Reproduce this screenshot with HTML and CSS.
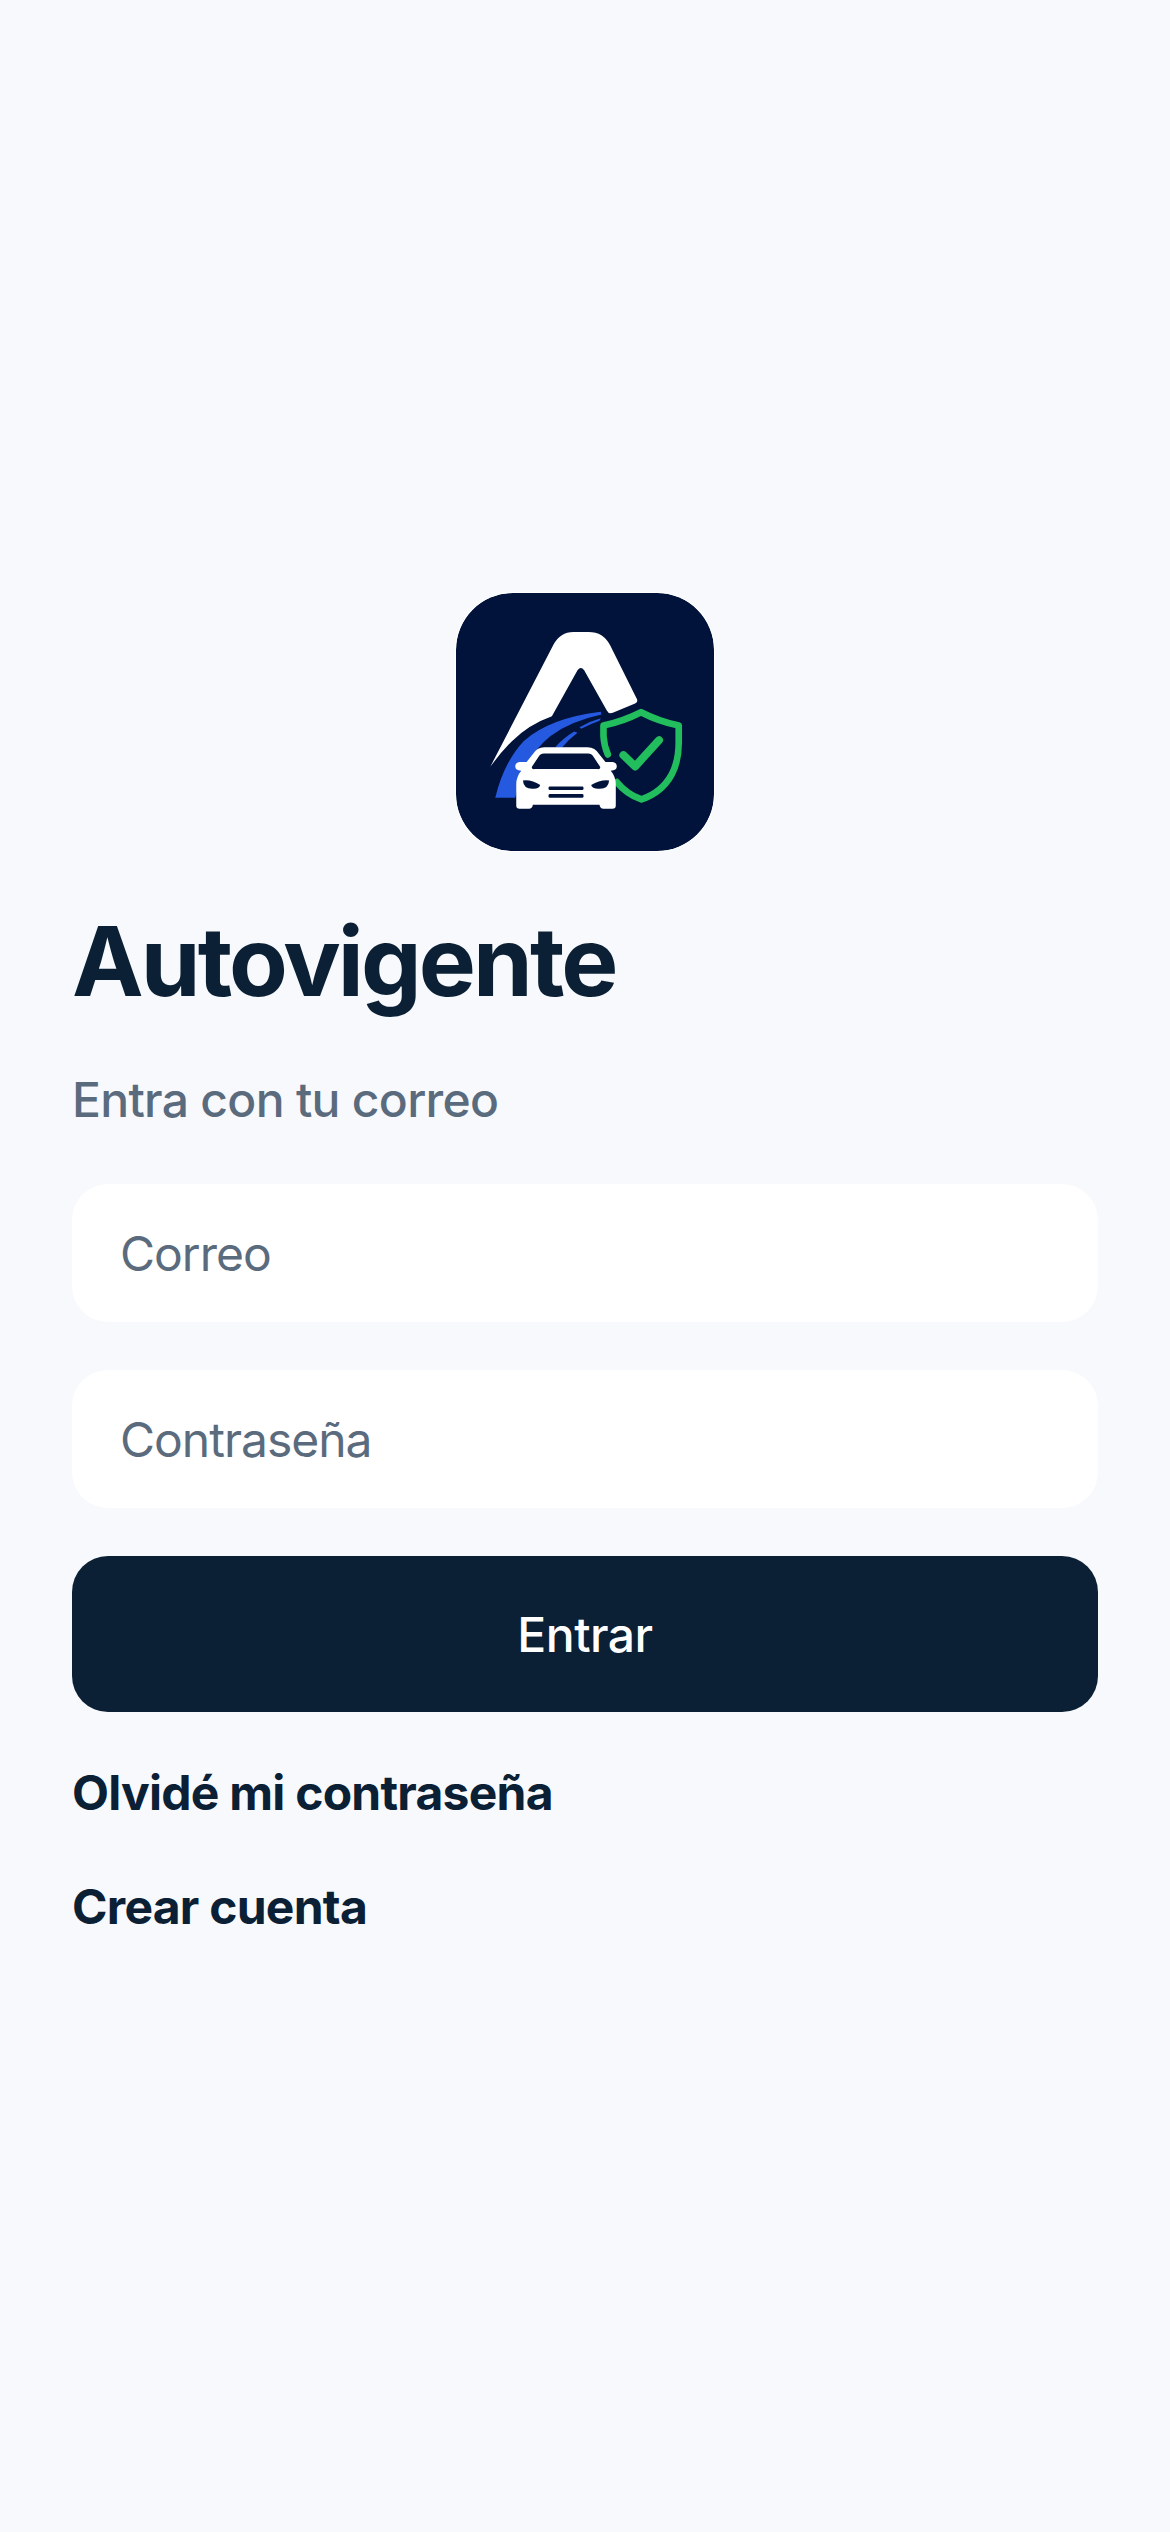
FILE: index.html
```html
<!DOCTYPE html>
<html lang="es">
<head>
  <meta charset="UTF-8">
  <title>Autovigente</title>
  <link rel="stylesheet" href="styles.css">
</head>
<body>
  <main class="login">
    <svg class="logo" viewBox="47 40 775 775" role="img" aria-label="Autovigente">
      <rect x="47" y="40" width="775" height="775" rx="170" fill="#02133b"/>
      <!-- A -->
      <path fill="#fff" d="M150 562 L340 195 Q360 157 400 157 L445 157 Q490 157 510 197 L590 358 Q595 368 585 372 L518 400 Q506 405 500 393 L432 272 Q422 258 412 272 L335 410 Q265 435 215 485 Q180 520 150 562 Z"/>
      <!-- carretera -->
      <path fill="#2559e0" d="M482 397 L484 405 Q390 425 330 470 Q250 535 225 655 L165 655 Q190 550 250 485 Q330 415 482 397 Z"/>
      <path fill="#2559e0" d="M418 443 Q448 425 482 416 L478 424 Q450 434 423 448 Z"/>
      <path fill="#2559e0" d="M345 503 Q370 475 402 456 L412 460 Q385 480 365 505 Z"/>
      <!-- escudo -->
      <path fill="none" stroke="#22bd5c" stroke-width="20" stroke-linejoin="round" stroke-linecap="round" d="M530 608 Q560 645 604 660 Q665 640 695 585 Q716 545 716 490 L716 438 Q655 425 603 398 Q550 425 490 438 L490 470 Q492 500 503 525"/>
      <path fill="none" stroke="#22bd5c" stroke-width="24" stroke-linejoin="round" stroke-linecap="round" d="M550 527 L585 561 L657 482"/>
      <!-- coche -->
      <path fill="#fff" d="M312 503 L442 503 Q465 503 478 525 L496 548 L518 548 Q530 550 530 561 Q530 572 512 574 Q527 592 527 615 L527 678 Q527 688 517 688 L490 688 Q480 688 478 676 L278 676 Q276 688 266 688 L238 688 Q228 688 228 678 L228 615 Q228 592 243 574 Q225 572 225 561 Q225 550 237 548 L259 548 L277 525 Q290 503 312 503 Z"/>
      <path fill="#02133b" d="M311 522 L444 522 Q454 522 460 532 L480 562 Q482 570 472 569 L283 569 Q273 570 275 562 L295 532 Q301 522 311 522 Z"/>
      <path fill="#02133b" d="M248 603 Q275 600 300 617 Q298 628 280 628 Q250 630 248 603 Z"/>
      <path fill="#02133b" d="M507 603 Q480 600 453 617 Q455 628 475 628 Q505 630 507 603 Z"/>
      <rect x="325" y="621" width="105" height="11" rx="4" fill="#02133b"/>
      <rect x="325" y="644" width="105" height="11" rx="4" fill="#02133b"/>
    </svg>

    <h1 class="title">Autovigente</h1>
    <p class="subtitle">Entra con tu correo</p>

    <form class="form">
      <input class="field" type="email" placeholder="Correo">
      <input class="field" type="password" placeholder="Contraseña">
      <button class="submit" type="button">Entrar</button>
    </form>

    <div class="links">
      <a class="link" href="#">Olvidé mi contraseña</a>
      <a class="link" href="#">Crear cuenta</a>
    </div>
  </main>
</body>
</html>
```

FILE: styles.css
```css
* {
  box-sizing: border-box;
}

body {
  margin: 0;
  font-family: Inter, "Noto Sans", sans-serif;
  background-color: #f7f9fc;
  color: #0b2034;
}

.login {
  min-height: 2532px;
  padding: 0 72px 3px;
  display: flex;
  flex-direction: column;
  justify-content: center;
}

.logo {
  display: block;
  width: 258px;
  height: 258px;
  margin: 0 auto 52px;
  border-radius: 57px;
  box-shadow: 0 0 0 1px #fff;
}

.title {
  margin: 0 0 52px;
  font-size: 96px;
  line-height: 116px;
  font-weight: 750;
  letter-spacing: -2.9px;
}

.subtitle {
  margin: 0 0 55px;
  font-size: 48px;
  line-height: 58px;
  font-weight: 500;
  letter-spacing: -0.7px;
  color: #5b6b7e;
}

.form {
  display: flex;
  flex-direction: column;
  gap: 48px;
}

.field {
  width: 100%;
  height: 138px;
  padding: 0 48px;
  border: 0;
  border-radius: 36px;
  background-color: #fff;
  font-family: inherit;
  font-size: 48px;
  letter-spacing: -1px;
  color: #0b2034;
  outline: none;
}

.field::placeholder {
  color: #5b6b7e;
  opacity: 1;
}

.submit {
  height: 156px;
  border: 0;
  border-radius: 36px;
  background-color: #0b2034;
  color: #fff;
  font-family: inherit;
  font-size: 48px;
  font-weight: 550;
  letter-spacing: -0.5px;
}

.links {
  margin-top: 52px;
  display: flex;
  flex-direction: column;
  align-items: flex-start;
  gap: 56px;
}

.link {
  font-size: 48px;
  line-height: 58px;
  font-weight: 700;
  letter-spacing: -0.75px;
  color: #0b2034;
  text-decoration: none;
}
```
